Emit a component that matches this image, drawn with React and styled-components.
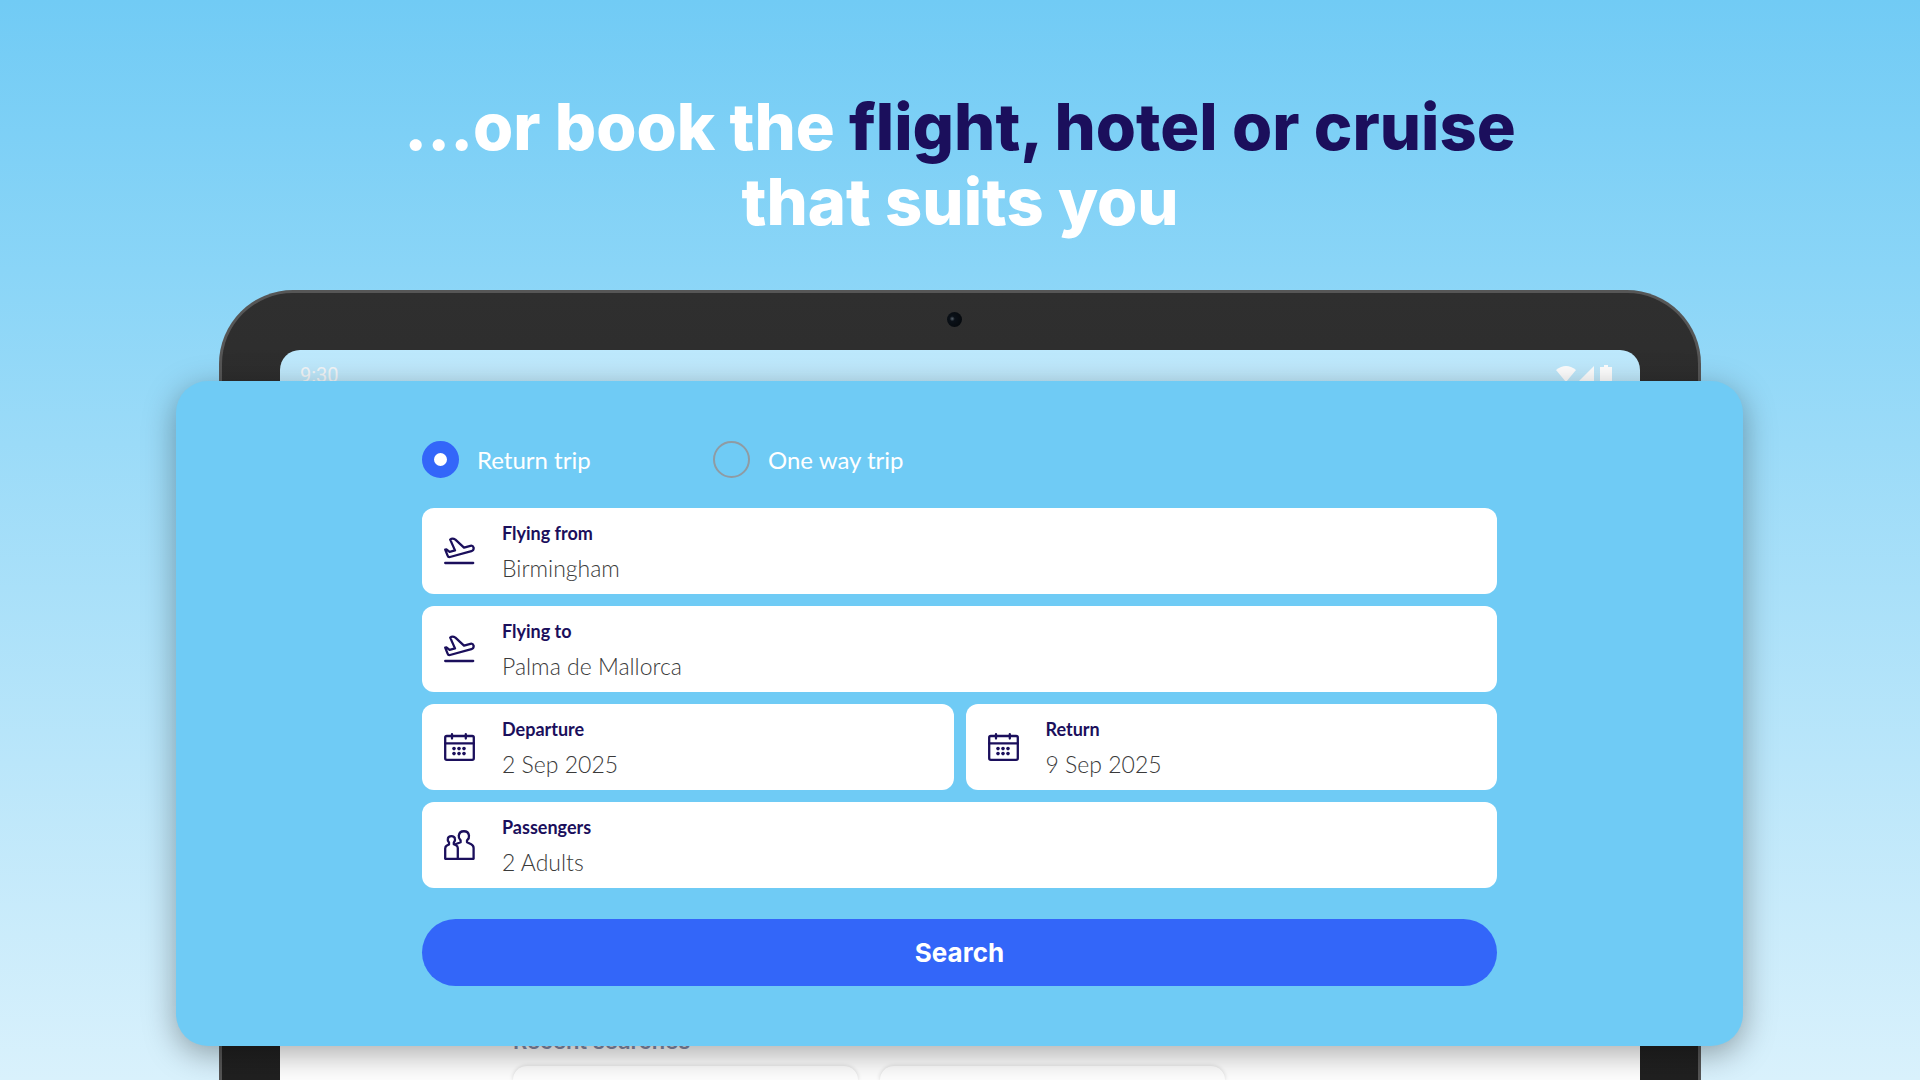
import React, { useState } from 'react';
import styled, { createGlobalStyle } from 'styled-components';

const GlobalStyle = createGlobalStyle`
  * {
    box-sizing: border-box;
  }

  body {
    margin: 0;
    font-family: Lato, 'Open Sans', sans-serif;
  }
`;

const Page = styled.main`
  display: flex;
  flex-direction: column;
  height: 100vh;
  overflow: hidden;
  background: linear-gradient(180deg, #71cbf5 0%, #8ad5f7 25%, #d9f1fc 100%);
`;

const Headline = styled.h1`
  margin: 0;
  padding: 89px 24px 0;
  color: #ffffff;
  font-family: Inter, sans-serif;
  font-size: 65px;
  font-weight: 800;
  line-height: 75px;
  text-align: center;
`;

const Accent = styled.span`
  color: #1b0f5c;
`;

/* tablet and booking card share one grid cell, the card is on top */
const Stage = styled.div`
  display: grid;
  flex: 1 0 auto;
  margin-top: 51px;
  padding: 0 177px 0 176px;
`;

const Tablet = styled.div`
  display: flex;
  flex-direction: column;
  grid-area: 1 / 1;
  margin: 0 42px 0 43px;
  padding: 0 58px;
  border: 3px solid #565656;
  border-bottom: 0;
  border-radius: 74px 74px 0 0;
  background: linear-gradient(180deg, #2f2f2f, #202020);
`;

const Bezel = styled.div`
  display: flex;
  align-items: flex-start;
  justify-content: center;
  height: 57px;
  padding-top: 19px;
`;

const Camera = styled.div`
  width: 15px;
  height: 15px;
  margin-right: 12px;
  border-radius: 50%;
  background: radial-gradient(circle at 35% 45%, #56606a 0, #0b1118 20%, #04070a 100%);
`;

const Screen = styled.div`
  display: flex;
  flex: 1;
  flex-direction: column;
  justify-content: space-between;
  border-radius: 20px 20px 0 0;
  background: linear-gradient(180deg, #bce8fc 0%, #ffffff 60%);
`;

const StatusBar = styled.div`
  display: flex;
  align-items: flex-start;
  justify-content: space-between;
  padding: 14px 28px 0 20px;
  color: #f5f8fa;
  font-family: Roboto, sans-serif;
  font-size: 20px;
  line-height: 22px;
`;

const Recent = styled.section`
  padding: 0 233px;
`;

const RecentTitle = styled.h2`
  margin: 0;
  color: #858ba8;
  font-family: Inter, sans-serif;
  font-size: 22px;
  font-weight: 600;
  line-height: 26px;
`;

const RecentList = styled.div`
  display: flex;
  gap: 22px;
  margin-top: 12px;
`;

const RecentItem = styled.div`
  width: 345px;
  height: 14px;
  border-radius: 14px 14px 0 0;
  background: #ffffff;
  box-shadow: 0 0 4px rgba(0, 0, 0, 0.16);
`;

const BookingCard = styled.form`
  z-index: 1;
  grid-area: 1 / 1;
  margin: 91px 0 34px;
  padding: 60px 246px;
  border-radius: 32px;
  background: #6fcbf5;
  box-shadow: 0 8px 32px rgba(0, 0, 0, 0.34);
`;

const TripTypes = styled.div`
  display: flex;
  margin-bottom: 30px;
`;

const TripOption = styled.label`
  display: flex;
  align-items: center;
  gap: 18px;
  width: 291px;
  color: #ffffff;
  font-size: 24px;
  line-height: 37px;
`;

const Radio = styled.input`
  appearance: none;
  width: 37px;
  height: 37px;
  margin: 0;
  border: 2px solid #8f9ba3;
  border-radius: 50%;

  &:checked {
    border: 12px solid #3366f9;
    background: #ffffff;
  }
`;

const Fields = styled.div`
  display: grid;
  grid-template-columns: 1fr 1fr;
  gap: 12px;
`;

const FieldBox = styled.label`
  display: flex;
  align-items: center;
  gap: 26px;
  grid-column: ${({ $half }) => ($half ? 'auto' : '1 / -1')};
  height: 86px;
  padding: 0 22px;
  border-radius: 12px;
  background: #ffffff;
`;

const FieldText = styled.span`
  display: flex;
  flex: 1;
  flex-direction: column;
  min-width: 0;
`;

const FieldLabel = styled.span`
  padding-top: 3px;
  color: #1b0f5c;
  font-size: 18px;
  font-weight: 700;
  line-height: 30px;
`;

const FieldInput = styled.input`
  width: 100%;
  height: 39px;
  padding: 0;
  border: 0;
  outline: 0;
  background: transparent;
  color: #3a3a3a;
  font-family: inherit;
  font-size: 23px;
  font-weight: 300;
`;

const SearchButton = styled.button`
  width: 100%;
  height: 67px;
  margin-top: 31px;
  border: 0;
  border-radius: 34px;
  background: #3366f9;
  color: #ffffff;
  font-family: Inter, sans-serif;
  font-size: 26px;
  font-weight: 700;
`;

const Icon = styled.svg`
  flex: none;
  fill: none;
  stroke: #1b0f5c;
  stroke-width: 2.3;
  stroke-linecap: round;
  stroke-linejoin: round;
`;

const PlaneIcon = () => (
  <Icon width="32" height="28" viewBox="0 0 32 28">
    <path d="M1.2 12.6 3.6 18.6Q4.2 20.4 6 20L27.4 14.2Q30 13.2 29.6 10.6 28.8 8.2 26.4 8.8L20 10.6 11.4 2.6Q8.4.6 6.2 2.6L11 13.4 5.6 14.8 2.4 12.4Z" />
    <path d="M1.2 26H29.2" />
  </Icon>
);

const CalendarIcon = () => (
  <Icon width="32" height="28" viewBox="0 0 32 28">
    <rect x="1.2" y="3" width="28.6" height="23.8" rx="1.6" />
    <path d="M1 10.4H29.6M8 1.2V5.6M21.8 1.2V5.6" />
    <g fill="#1b0f5c" stroke="none">
      {[10, 15, 20].map((x) => (
        <React.Fragment key={x}>
          <circle cx={x} cy="15.6" r="1.8" />
          <circle cx={x} cy="20.6" r="1.8" />
        </React.Fragment>
      ))}
    </g>
  </Icon>
);

const PeopleIcon = () => (
  <Icon width="32" height="30" viewBox="0 0 32 30">
    <path d="M1.2 28.8V18.4Q1.2 16.4 2.8 15.6L5 14.4V12.6C3.6 11 3.6 9.6 3.8 8.8 4.4 5.2 10.4 5.2 11 8.8 11.2 9.6 11 11 9.8 12.6V14.2L12 15.2Q13.8 16 13.8 18V28.8Z" />
    <path d="M12 14 16.6 12.2V10.4C14.6 8.4 14.6 6.6 14.8 5.6 15.6-.2 24.2-.2 25 5.6 25.2 7 24.8 8.8 23 10.4V12.2L27.2 14.2Q29.6 15.4 29.6 18V28.8H13.8" />
  </Icon>
);

const StatusIcons = () => (
  <svg width="56" height="22" viewBox="0 0 56 22" fill="#ffffff">
    <path d="M0 6Q10-2 20 6L10 18Z" />
    <path d="M38 2V18H22Z" />
    <path d="M44 3H48V1H52V3H56V18H44Z" />
  </svg>
);

const Field = ({ icon, label, value, half }) => (
  <FieldBox $half={half}>
    {icon}
    <FieldText>
      <FieldLabel>{label}</FieldLabel>
      <FieldInput type="text" defaultValue={value} />
    </FieldText>
  </FieldBox>
);

const App = () => {
  const [trip, setTrip] = useState('return');

  return (
    <>
      <GlobalStyle />
      <Page>
        <Headline>
          ...or book the <Accent>flight, hotel or cruise</Accent>
          <br />
          that suits you
        </Headline>
        <Stage>
          <Tablet>
            <Bezel>
              <Camera />
            </Bezel>
            <Screen>
              <StatusBar>
                <span>9:30</span>
                <StatusIcons />
              </StatusBar>
              <Recent>
                <RecentTitle>Recent searches</RecentTitle>
                <RecentList>
                  <RecentItem />
                  <RecentItem />
                </RecentList>
              </Recent>
            </Screen>
          </Tablet>
          <BookingCard onSubmit={(e) => e.preventDefault()}>
            <TripTypes>
              <TripOption>
                <Radio type="radio" name="trip" checked={trip === 'return'} onChange={() => setTrip('return')} />
                Return trip
              </TripOption>
              <TripOption>
                <Radio type="radio" name="trip" checked={trip === 'oneway'} onChange={() => setTrip('oneway')} />
                One way trip
              </TripOption>
            </TripTypes>
            <Fields>
              <Field icon={<PlaneIcon />} label="Flying from" value="Birmingham" />
              <Field icon={<PlaneIcon />} label="Flying to" value="Palma de Mallorca" />
              <Field icon={<CalendarIcon />} label="Departure" value="2 Sep 2025" half />
              <Field icon={<CalendarIcon />} label="Return" value="9 Sep 2025" half />
              <Field icon={<PeopleIcon />} label="Passengers" value="2 Adults" />
            </Fields>
            <SearchButton type="submit">Search</SearchButton>
          </BookingCard>
        </Stage>
      </Page>
    </>
  );
};

export default App;
